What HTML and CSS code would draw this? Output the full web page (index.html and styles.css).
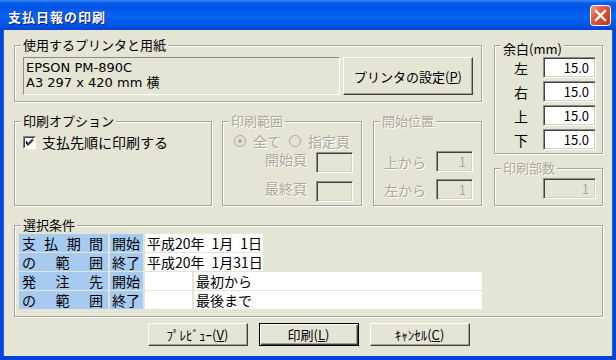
FILE: index.html
```html
<!DOCTYPE html>
<html lang="ja">
<head>
    <meta charset="UTF-8">
    <title>支払日報の印刷</title>
    <link rel="stylesheet" href="styles.css">
</head>
<body>
<div class="window">
    <div class="titlebar">
        <span class="title">支払日報の印刷</span>
        <span class="close-btn">
            <svg width="21" height="21" viewBox="0 0 21 21">
                <defs>
                    <linearGradient id="closeGrad" x1="0" y1="0" x2="1" y2="1">
                        <stop offset="0" stop-color="#f2a48c"/>
                        <stop offset="0.4" stop-color="#e1583a"/>
                        <stop offset="1" stop-color="#bf3416"/>
                    </linearGradient>
                </defs>
                <rect x="0.5" y="0.5" width="20" height="20" rx="3" fill="url(#closeGrad)" stroke="#fff"/>
                <path d="M6 6 L15 15 M15 6 L6 15" stroke="#fff" stroke-width="2.4" stroke-linecap="square"/>
            </svg>
        </span>
    </div>

    <div class="client">
        <div class="top">
            <div class="left-col">
                <div class="group printer">
                    <div class="group-title">使用するプリンタと用紙</div>
                    <div class="printer-body">
                        <div class="printer-name">EPSON PM-890C<br>A3 297 x 420 mm 横</div>
                        <div class="btn printer-btn">プリンタの設定(<u>P</u>)</div>
                    </div>
                </div>

                <div class="option-row">
                    <div class="group options">
                        <div class="group-title">印刷オプション</div>
                        <div class="check-row">
                            <svg class="checkbox" width="13" height="13" viewBox="0 0 13 13">
                                <rect x="0" y="0" width="13" height="13" fill="#fff"/>
                                <path d="M0.5 12.5 V0.5 H12.5" stroke="#808080" fill="none"/>
                                <path d="M1.5 11.5 V1.5 H11.5" stroke="#404040" fill="none"/>
                                <path d="M3 6 L5 8.5 L10 3.5 M3 7 L5 9.5 L10 4.5 M3 5 L5 7.5 L10 2.5" stroke="#000" fill="none" stroke-width="1"/>
                            </svg>
                            <span>支払先順に印刷する</span>
                        </div>
                    </div>

                    <div class="group range disabled">
                        <div class="group-title">印刷範囲</div>
                        <div class="radio-row">
                            <svg class="radio" width="12" height="12" viewBox="0 0 12 12">
                                <circle cx="6" cy="6" r="5.5" fill="#e5e5d6" stroke="#aca899"/>
                                <circle cx="6" cy="6" r="2" fill="#aca899"/>
                            </svg>
                            <span class="radio-label">全て</span>
                            <svg class="radio" width="12" height="12" viewBox="0 0 12 12">
                                <circle cx="6" cy="6" r="5.5" fill="#e5e5d6" stroke="#aca899"/>
                            </svg>
                            <span class="radio-label">指定頁</span>
                        </div>
                        <div class="field-row first">
                            <span class="field-label">開始頁</span>
                            <div class="edit small"></div>
                        </div>
                        <div class="field-row">
                            <span class="field-label">最終頁</span>
                            <div class="edit small"></div>
                        </div>
                    </div>

                    <div class="group start disabled">
                        <div class="group-title">開始位置</div>
                        <div class="field-row first">
                            <span class="field-label">上から</span>
                            <div class="edit small">1</div>
                        </div>
                        <div class="field-row">
                            <span class="field-label">左から</span>
                            <div class="edit small">1</div>
                        </div>
                    </div>
                </div>
            </div>

            <div class="right-col">
                <div class="group margins">
                    <div class="group-title">余白(mm)</div>
                    <div class="margin-row"><span>左</span><div class="edit">15.0</div></div>
                    <div class="margin-row"><span>右</span><div class="edit">15.0</div></div>
                    <div class="margin-row"><span>上</span><div class="edit">15.0</div></div>
                    <div class="margin-row"><span>下</span><div class="edit">15.0</div></div>
                </div>
                <div class="group copies disabled">
                    <div class="group-title">印刷部数</div>
                    <div class="edit">1</div>
                </div>
            </div>
        </div>

        <div class="group selection">
            <div class="group-title">選択条件</div>
            <div class="cond-table">
                <div class="cell head spread"><span>支</span><span>払</span><span>期</span><span>間</span></div>
                <div class="cell head">開始</div>
                <div class="cell value date">平成20年&ensp;1月&ensp;1日</div>

                <div class="cell head spread"><span>の</span><span>範</span><span>囲</span></div>
                <div class="cell head">終了</div>
                <div class="cell value date">平成20年&ensp;1月31日</div>

                <div class="cell head spread"><span>発</span><span>注</span><span>先</span></div>
                <div class="cell head">開始</div>
                <div class="cell value"></div>
                <div class="cell value wide">最初から</div>

                <div class="cell head spread"><span>の</span><span>範</span><span>囲</span></div>
                <div class="cell head">終了</div>
                <div class="cell value"></div>
                <div class="cell value wide">最後まで</div>
            </div>
        </div>

        <div class="buttons">
            <div class="btn">ﾌﾟﾚﾋﾞｭｰ(<u>V</u>)</div>
            <div class="btn default">印刷(<u>L</u>)</div>
            <div class="btn">ｷｬﾝｾﾙ(<u>C</u>)</div>
        </div>
    </div>
</div>
</body>
</html>
```

FILE: styles.css
```css
body {
    margin: 0;
    font-family: "Noto Sans CJK JP", "Liberation Sans", sans-serif;
    font-size: 13px;
    color: #000;
}

.window {
    width: 616px;
    height: 360px;
    box-sizing: border-box;
    background: #0842d8;
    display: flex;
    flex-direction: column;
}

.titlebar {
    height: 30px;
    flex: none;
    display: flex;
    align-items: center;
    justify-content: space-between;
    padding: 0 5px 0 8px;
    background: linear-gradient(to bottom, #3a8cf8 0, #0a5ae8 3px, #0055e5 8px, #0863f2 16px, #0058e6 24px, #004ad8 28px, #0842d8 30px);
}

.title {
    color: #fff;
    font-weight: bold;
    font-size: 13px;
    letter-spacing: 1px;
    text-shadow: 1px 1px 0 #0a1883;
    margin-top: 2px;
}

.close-btn {
    display: flex;
    margin-top: 1px;
}

.client {
    flex: 1;
    margin: 0 4px 4px;
    background: #e5e5d6;
    padding: 15px 9px 0 10px;
    box-shadow: -1px 0 0 #1d62ee, 1px 0 0 #1d62ee;
}

/* group boxes */
.group {
    box-sizing: border-box;
    border: 1px solid #a5a597;
    box-shadow: 1px 1px 0 #fff, inset 1px 1px 0 #fff;
}

.group-title {
    width: fit-content;
    height: 16px;
    line-height: 16px;
    margin: -9px 0 0 6px;
    padding: 0 2px;
    background: #e5e5d6;
}

.disabled {
    color: #aca899;
    text-shadow: 1px 1px 0 #fff;
}

.top {
    display: flex;
    gap: 12px;
}

.left-col {
    width: 468px;
}

.printer {
    height: 57px;
}

.printer-body {
    display: flex;
    gap: 3px;
    margin-top: 4px;
    padding-left: 8px;
}

.printer-name {
    width: 317px;
    height: 38px;
    box-sizing: border-box;
    border: 1px solid;
    border-color: #8e8e86 #fff #fff #8e8e86;
    padding: 2px 0 0 2px;
    font-family: "DejaVu Sans", "Noto Sans CJK JP", sans-serif;
    font-size: 13px;
    line-height: 15px;
}

.printer-btn {
    width: 130px;
    height: 38px;
}

.option-row {
    display: flex;
    margin-top: 19px;
}

.options {
    width: 198px;
    height: 85px;
}

.range {
    width: 140px;
    height: 85px;
    margin-left: 10px;
}

.start {
    width: 109px;
    height: 85px;
    margin-left: 11px;
}

.check-row {
    display: flex;
    align-items: center;
    gap: 6px;
    margin-top: 5px;
    padding-left: 8px;
    font-size: 14px;
    line-height: 16px;
}

.radio-row {
    display: flex;
    align-items: center;
    margin-top: 4px;
    padding-left: 11px;
    font-size: 14px;
    line-height: 16px;
}

.radio-label {
    margin: 0 8px 0 7px;
}

.field-row {
    display: flex;
    justify-content: flex-end;
    align-items: center;
    padding-right: 8px;
    margin-top: 7px;
    font-size: 14px;
}

.field-row.first {
    margin-top: 2px;
}

.start .field-row.first {
    margin-top: 22px;
}

.field-label {
    margin: 0 9px 6px 0;
    line-height: 16px;
}

.start .field-label {
    margin: 0 10px 0 0;
}

/* edit boxes */
.edit {
    width: 53px;
    height: 21px;
    box-sizing: border-box;
    border: 1px solid;
    border-color: #8e8e86 #fff #fff #8e8e86;
    box-shadow: inset 1px 1px 0 #404040, inset -1px -1px 0 #d4d0c8;
    background: #fff;
    text-align: right;
    padding: 0 6px 0 0;
    font-size: 13px;
    line-height: 19px;
}

.edit.small {
    width: 37px;
}

.disabled .edit {
    background: #e5e5d6;
    color: #aca899;
    text-shadow: none;
}

.right-col {
    width: 109px;
}

.margins {
    height: 109px;
    padding-top: 4px;
}

.margin-row {
    display: flex;
    align-items: center;
    margin-bottom: 3px;
    font-size: 14px;
}

.margin-row span {
    width: 33px;
    padding-right: 15px;
    text-align: right;
}

.copies {
    height: 38px;
    margin-top: 14px;
}

.copies .edit {
    margin: 2px 0 0 48px;
}

/* selection table */
.selection {
    width: 589px;
    height: 92px;
    margin-top: 19px;
}

.cond-table {
    display: grid;
    grid-template-columns: 89px 33px 47px 69px 217px;
    grid-auto-rows: 18px;
    gap: 1px 2px;
    margin: 1px 0 0 4px;
    font-size: 14px;
    line-height: 18px;
}

.cell {
    padding-left: 2px;
    white-space: nowrap;
}

.head {
    background: #a6caf0;
}

.spread {
    grid-column: 1;
    display: flex;
    justify-content: space-between;
    padding: 0 5px 0 3px;
}

.value {
    background: #fff;
}

.date {
    grid-column: span 2;
}

.wide {
    grid-column: span 2;
}

/* buttons */
.btn {
    box-sizing: border-box;
    display: flex;
    align-items: center;
    justify-content: center;
    border: 1px solid;
    border-color: #fff #404040 #404040 #fff;
    box-shadow: inset -1px -1px 0 #a0a095;
    background: #e5e5d6;
    font-size: 13px;
}

.buttons {
    display: flex;
    justify-content: center;
    gap: 11px;
    margin-top: 6px;
}

.buttons .btn {
    width: 100px;
    height: 23px;
}

.btn.default {
    border-color: #000;
    box-shadow: inset 1px 1px 0 #fff, inset -1px -1px 0 #404040, inset -2px -2px 0 #a0a095;
}
```
